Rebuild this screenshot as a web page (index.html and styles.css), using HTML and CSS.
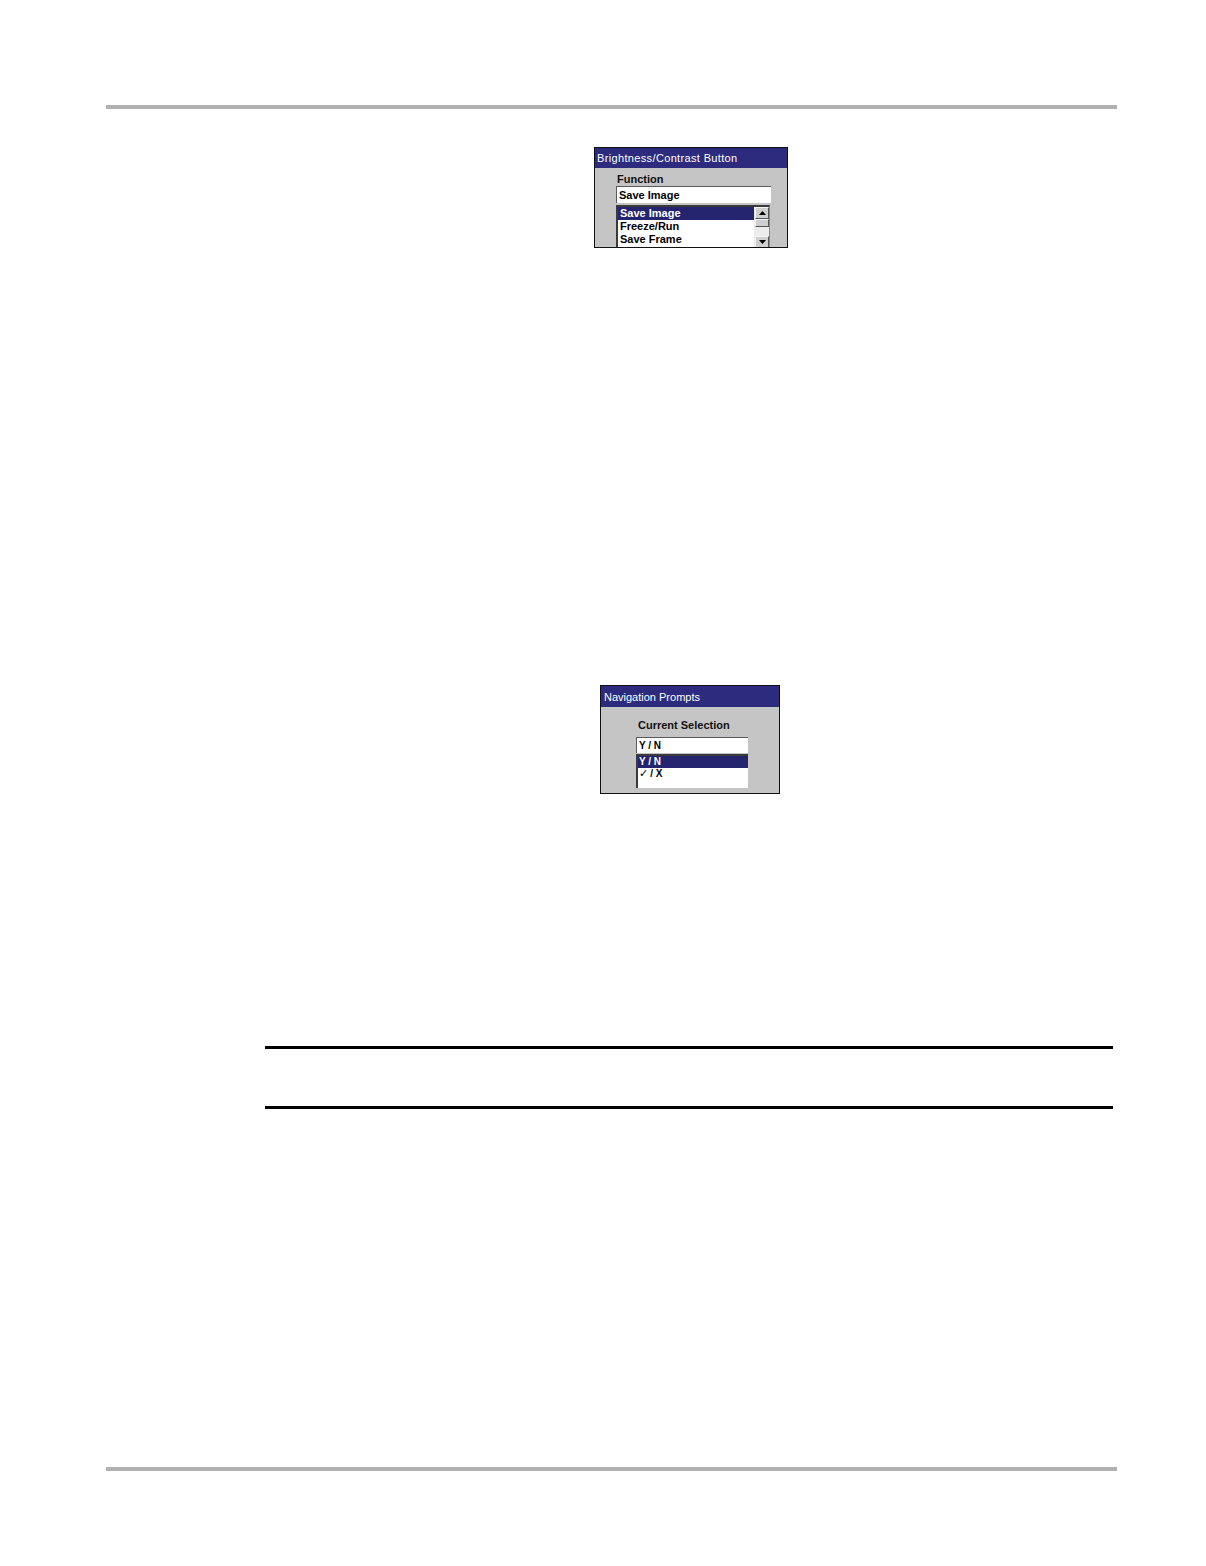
FILE: index.html
```html
<!DOCTYPE html>
<html>
<head>
<meta charset="utf-8">
<link rel="stylesheet" href="styles.css">
</head>
<body>
<div class="rule-top"></div>

<div class="dlg dlg1">
  <div class="title t1">Brightness/Contrast Button</div>
  <div class="body1">
    <div class="label">Function</div>
    <div class="field f1">Save Image</div>
    <div class="list l1">
      <div class="rows">
        <div class="row sel">Save Image</div>
        <div class="row">Freeze/Run</div>
        <div class="row">Save Frame</div>
      </div>
      <div class="scroll">
        <div class="btn"><svg width="7" height="4" viewBox="0 0 7 4"><path d="M3.5 0L7 4H0z" fill="#000"/></svg></div>
        <div class="thumb"></div>
        <div class="track"></div>
        <div class="btn"><svg width="7" height="4" viewBox="0 0 7 4"><path d="M0 0H7L3.5 4z" fill="#000"/></svg></div>
      </div>
    </div>
  </div>
</div>

<div class="dlg dlg2">
  <div class="title t2">Navigation Prompts</div>
  <div class="body2">
    <div class="label l2lab">Current Selection</div>
    <div class="field f2">Y / N</div>
    <div class="list l2">
      <div class="rows">
        <div class="row r2 sel">Y / N</div>
        <div class="row r2"><span class="chk">✓</span>/ X</div>
      </div>
    </div>
  </div>
</div>

<div class="note"></div>

<div class="rule-bottom"></div>
</body>
</html>
```

FILE: styles.css
```css
html, body {
  margin: 0;
  padding: 0;
  background: #fff;
}
body {
  width: 1206px;
  height: 1566px;
  overflow: hidden;
  font-family: "Liberation Sans", Arial, sans-serif;
}
.rule-top {
  margin: 105px 0 0 106px;
  width: 1011px;
  height: 4px;
  background: #b1b1b1;
}
.dlg {
  box-sizing: border-box;
  border: 1px solid #111;
  background: #c5c5c5;
  overflow: hidden;
}
.dlg1 {
  margin: 38px 0 0 594px;
  width: 194px;
  height: 101px;
}
.title {
  height: 20px;
  background: #2c2b7d;
  color: #fff;
  font-size: 11px;
  line-height: 21px;
  padding-left: 2px;
  white-space: nowrap;
}
.t1 {
  letter-spacing: 0.35px;
}
.t2 {
  height: 21px;
  line-height: 22px;
  padding-left: 3px;
}
.label {
  font-size: 11px;
  font-weight: bold;
  line-height: 12px;
  color: #111;
}
.body1 .label {
  margin: 5px 0 0 22px;
}
.field {
  box-sizing: border-box;
  background: #fff;
  border-top: 1px solid #5a5a5a;
  border-left: 1px solid #5a5a5a;
  color: #000;
  font-weight: bold;
  white-space: nowrap;
}
.f1 {
  margin: 1px 0 0 21px;
  width: 155px;
  height: 17px;
  font-size: 11px;
  line-height: 16px;
  padding-left: 2px;
}
.list {
  box-sizing: border-box;
  background: #fff;
  border-top: 2px solid #3a3a3a;
  border-left: 2px solid #3a3a3a;
  border-right: 1px solid #8a8a8a;
  display: flex;
}
.l1 {
  margin: 2px 0 0 21px;
  width: 154px;
  height: 48px;
}
.rows {
  flex: 1;
  min-width: 0;
}
.row {
  font-size: 11px;
  font-weight: bold;
  line-height: 13px;
  height: 13px;
  padding-left: 2px;
  color: #000;
  white-space: nowrap;
}
.row.sel {
  background: #25246f;
  color: #fff;
}
.scroll {
  width: 15px;
  display: flex;
  flex-direction: column;
  background: #e8e8e8;
}
.btn {
  box-sizing: border-box;
  height: 12px;
  width: 14px;
  margin-left: 1px;
  background: #cfcfcf;
  border: 1px solid #555;
  border-top-color: #f4f4f4;
  border-left-color: #f4f4f4;
  display: flex;
  align-items: center;
  justify-content: center;
}
.thumb {
  box-sizing: border-box;
  height: 8px;
  width: 14px;
  margin-left: 1px;
  background: #cfcfcf;
  border: 1px solid #555;
  border-top-color: #f4f4f4;
  border-left-color: #f4f4f4;
}
.track {
  height: 9px;
  background: #ececec;
}
.dlg2 {
  margin: 437px 0 0 600px;
  width: 180px;
  height: 109px;
}
.body2 .label {
  margin: 12px 0 0 37px;
}
.f2 {
  margin: 6px 0 0 35px;
  width: 112px;
  height: 16px;
  font-size: 10px;
  line-height: 15px;
  padding-left: 2px;
}
.l2 {
  margin: 1px 0 0 35px;
  width: 112px;
  height: 34px;
  border-right: none;
}
.r2 {
  font-size: 10px;
  height: 12px;
  line-height: 12px;
  padding-left: 1px;
}
.chk {
  font-family: "DejaVu Sans", sans-serif;
  font-weight: bold;
  font-size: 11px;
  margin-right: 2px;
}
.note {
  margin: 252px 0 0 265px;
  width: 848px;
  height: 57px;
  border-top: 3px solid #000;
  border-bottom: 3px solid #000;
}
.rule-bottom {
  margin: 358px 0 0 106px;
  width: 1011px;
  height: 4px;
  background: #b1b1b1;
}
```
